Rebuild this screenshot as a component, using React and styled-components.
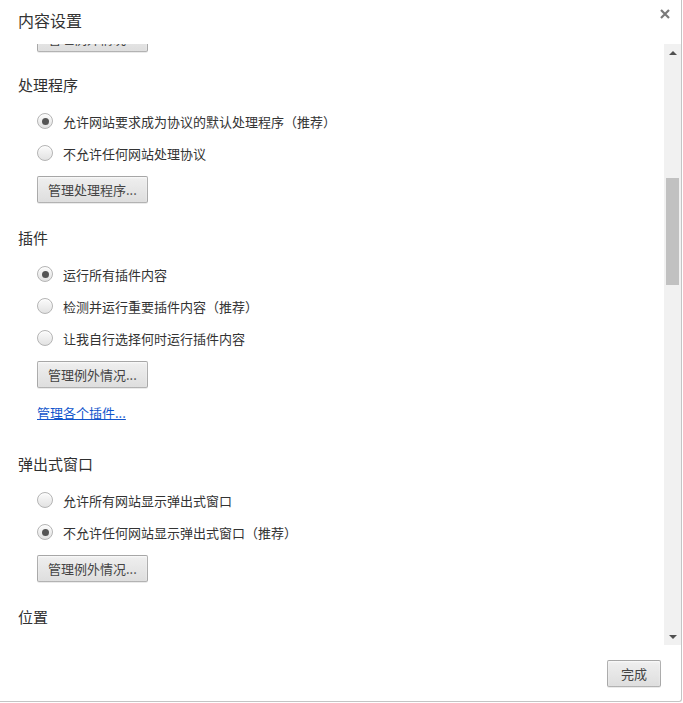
import React from "react";
import styled, { createGlobalStyle } from "styled-components";

const GlobalStyle = createGlobalStyle`
  html, body {
    margin: 0;
    padding: 0;
    background: #fff;
  }
  body {
    font-family: "Noto Sans CJK SC", "Noto Sans", sans-serif;
    color: #333;
  }
`;

const Dialog = styled.div`
  width: 681px;
  height: 701px;
  display: flex;
  flex-direction: column;
  background: #fff;
  border-right: 1px solid #c4c4c4;
  border-bottom: 1px solid #c4c4c4;
  border-bottom-right-radius: 3px;
  overflow: hidden;
`;

const Header = styled.div`
  height: 44px;
  display: flex;
  justify-content: space-between;
  align-items: flex-start;
  padding: 0 11px 0 18px;
  flex-shrink: 0;
`;

const Title = styled.h1`
  margin: 9px 0 0;
  font-size: 16px;
  line-height: 22px;
  font-weight: normal;
  color: #333;
`;

const CloseButton = styled.button`
  margin-top: 9px;
  padding: 0;
  border: 0;
  background: none;
  width: 10px;
  height: 10px;
  display: flex;
  svg {
    display: block;
  }
`;

const Body = styled.div`
  height: 601px;
  display: flex;
  flex-shrink: 0;
`;

const Scroller = styled.div`
  flex: 1;
  overflow: hidden;
  padding-left: 18px;
`;

// the list is scrolled down a little, so the first button is cut at the top
const Content = styled.div`
  margin-top: -26px;
`;

const Section = styled.section`
  display: flex;
  flex-direction: column;
  align-items: flex-start;
  margin-bottom: ${(p) => (p.$tight ? "23px" : "25px")};
`;

const Heading = styled.h2`
  margin: 0 0 10px;
  font-size: 15px;
  line-height: 20px;
  font-weight: normal;
  color: #303030;
`;

const Option = styled.label`
  height: 32px;
  display: flex;
  align-items: center;
  padding-left: 19px;
  font-size: 13px;
  color: #333;
`;

const Radio = styled.span`
  width: 14px;
  height: 14px;
  border-radius: 50%;
  border: 1px solid #b4b4b4;
  background: linear-gradient(#fbfbfb, #e2e2e2);
  box-shadow: inset 0 1px 1px rgba(255, 255, 255, 0.8);
  margin-right: 10px;
  display: flex;
  align-items: center;
  justify-content: center;
  flex-shrink: 0;

  &::after {
    content: "";
    width: 7px;
    height: 7px;
    border-radius: 50%;
    background: #555;
    display: ${(p) => (p.$checked ? "block" : "none")};
  }
`;

const Button = styled.button`
  height: 27px;
  padding: 0 10px;
  margin: 7px 0 0 19px;
  font-family: inherit;
  font-size: 13px;
  color: #444;
  border: 1px solid rgba(0, 0, 0, 0.25);
  border-radius: 2px;
  background: linear-gradient(#efefef, #dedede);
  box-shadow: 0 1px 0 rgba(0, 0, 0, 0.08), inset 0 1px 2px rgba(255, 255, 255, 0.75);
`;

const DoneButton = styled(Button)`
  margin: 0;
  padding: 0 13px;
`;

const Link = styled.a`
  margin: 15px 0 6px 19px;
  font-size: 13px;
  line-height: 20px;
  color: #15c;
  text-decoration: underline;
`;

const Scrollbar = styled.div`
  width: 17px;
  background: #f1f1f1;
  display: flex;
  flex-direction: column;
  align-items: center;
  flex-shrink: 0;
`;

const Arrow = styled.div`
  height: 17px;
  width: 17px;
  display: flex;
  align-items: center;
  justify-content: center;
  &::after {
    content: "";
    border-left: 4px solid transparent;
    border-right: 4px solid transparent;
    ${(p) => (p.$down ? "border-top: 4px solid #505050;" : "border-bottom: 4px solid #505050;")}
  }
`;

const Track = styled.div`
  flex: 1;
  width: 13px;
  padding-top: 117px;
`;

const Thumb = styled.div`
  height: 107px;
  background: #c1c1c1;
`;

const Footer = styled.div`
  flex: 1;
  display: flex;
  justify-content: flex-end;
  align-items: flex-start;
  padding: 15px 20px 0 0;
`;

const sections = [
  {
    title: "处理程序",
    options: [
      { label: "允许网站要求成为协议的默认处理程序（推荐）", checked: true },
      { label: "不允许任何网站处理协议" },
    ],
    button: "管理处理程序...",
  },
  {
    title: "插件",
    options: [
      { label: "运行所有插件内容", checked: true },
      { label: "检测并运行重要插件内容（推荐）" },
      { label: "让我自行选择何时运行插件内容" },
    ],
    button: "管理例外情况...",
    link: "管理各个插件...",
  },
  {
    title: "弹出式窗口",
    options: [
      { label: "允许所有网站显示弹出式窗口" },
      { label: "不允许任何网站显示弹出式窗口（推荐）", checked: true },
    ],
    button: "管理例外情况...",
  },
  {
    title: "位置",
    options: [{ label: "允许所有网站跟踪我的物理位置" }],
  },
];

const App = () => {
  return (
    <Dialog>
      <GlobalStyle />
      <Header>
        <Title>内容设置</Title>
        <CloseButton aria-label="关闭">
          <svg width="10" height="10" viewBox="0 0 10 10">
            <path d="M1 1 L9 9 M9 1 L1 9" stroke="#7a7a7a" strokeWidth="2.2" />
          </svg>
        </CloseButton>
      </Header>
      <Body>
        <Scroller>
          <Content>
            <Section $tight>
              <Button>管理例外情况...</Button>
            </Section>
            {sections.map((s, i) => (
              <Section key={i}>
                <Heading>{s.title}</Heading>
                {s.options.map((o, j) => (
                  <Option key={j}>
                    <Radio $checked={o.checked} />
                    {o.label}
                  </Option>
                ))}
                {s.button && <Button>{s.button}</Button>}
                {s.link && <Link href="#">{s.link}</Link>}
              </Section>
            ))}
          </Content>
        </Scroller>
        <Scrollbar>
          <Arrow />
          <Track>
            <Thumb />
          </Track>
          <Arrow $down />
        </Scrollbar>
      </Body>
      <Footer>
        <DoneButton>完成</DoneButton>
      </Footer>
    </Dialog>
  );
};

export default App;
